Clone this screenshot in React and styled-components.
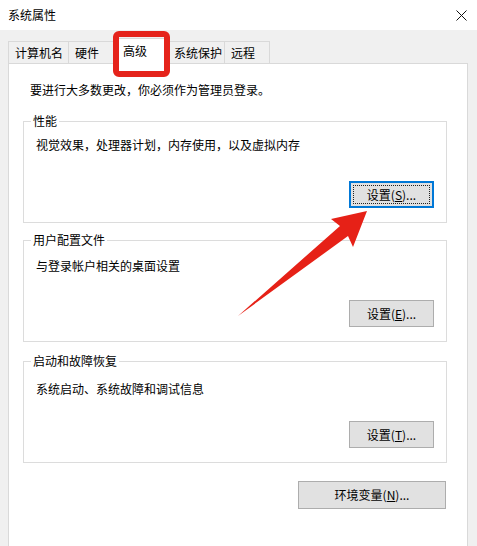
import styled, { createGlobalStyle } from "styled-components";

const GlobalStyle = createGlobalStyle`
  html, body {
    margin: 0;
    padding: 0;
    background: #f0f0f0;
  }
  * {
    box-sizing: border-box;
  }
`;

const Window = styled.div`
  position: relative;
  width: 477px;
  height: 546px;
  overflow: hidden;
  background: #f0f0f0;
  font-family: "Noto Sans CJK SC", "Liberation Sans", sans-serif;
  font-size: 12px;
  color: #000;
  display: flex;
  flex-direction: column;
`;

const TitleBar = styled.div`
  height: 30px;
  flex: none;
  background: #fff;
  display: flex;
  align-items: center;
  justify-content: space-between;
  padding: 0 10px 0 8px;
`;

const Title = styled.span`
  font-size: 12px;
  line-height: 16px;
  margin-top: -1px;
`;

const Body = styled.div`
  flex: 1;
  display: flex;
  flex-direction: column;
  padding: 8px 9px 0 8px;
`;

const TabStrip = styled.div`
  display: flex;
  align-items: flex-end;
  position: relative;
  z-index: 1;
  margin-bottom: -1px;
`;

const Tab = styled.div`
  width: ${(p) => p.$w}px;
  height: ${(p) => (p.$active ? 26 : 22)}px;
  margin-bottom: ${(p) => (p.$active ? 0 : 1)}px;
  margin-left: ${(p) => (p.$first ? 0 : -1)}px;
  padding: 0 0 ${(p) => (p.$active ? 2 : 0)}px ${(p) => (p.$active ? 8 : 6)}px;
  border: 1px solid #d9d9d9;
  border-bottom: none;
  background: ${(p) => (p.$active ? "#fff" : "#f0f0f0")};
  display: flex;
  align-items: center;
  line-height: 16px;
  white-space: nowrap;
`;

const Panel = styled.div`
  flex: 1;
  background: #fff;
  border: 1px solid #d9d9d9;
  border-bottom: none;
  padding: 18px 20px 0 14px;
  display: flex;
  flex-direction: column;
`;

const Intro = styled.p`
  margin: 0 0 15px 7px;
  line-height: 16px;
`;

const Group = styled.fieldset`
  margin: 0 0 ${(p) => p.$gap}px;
  padding: 0;
  min-width: 0;
  border: 1px solid #dcdcdc;
`;

const Legend = styled.legend`
  margin-left: 7px;
  padding: 0 2px;
  line-height: 16px;
`;

const GroupInner = styled.div`
  height: 93px;
  display: flex;
  flex-direction: column;
  align-items: flex-start;
  padding: ${(p) => p.$top}px 12px 14px 12px;
`;

const Desc = styled.span`
  line-height: 16px;
`;

const Button = styled.button`
  position: relative;
  width: ${(p) => p.$w}px;
  height: 27px;
  margin-top: auto;
  align-self: flex-end;
  background: #e1e1e1;
  border: 1px solid ${(p) => (p.$focused ? "#0078d7" : "#adadad")};
  box-shadow: ${(p) => (p.$focused ? "inset 0 0 0 1px #0078d7" : "none")};
  font-family: inherit;
  font-size: 12px;
  line-height: 16px;
  color: #000;
  padding: 0;
  display: flex;
  align-items: center;
  justify-content: center;

  ${(p) =>
    p.$focused &&
    `
    &::after {
      content: "";
      position: absolute;
      inset: 3px;
      border: 1px dotted #222;
    }
  `}

  u {
    text-decoration: underline;
    text-underline-offset: 1px;
  }
`;

const Footer = styled.div`
  display: flex;
  justify-content: flex-end;
  margin-top: 18px;
  padding-right: 1px;
`;

const EnvButton = styled(Button)`
  height: 28px;
  margin-top: 0;
`;

const Highlight = styled.div`
  position: absolute;
  left: 113px;
  top: 31px;
  width: 57px;
  height: 46px;
  border: 6px solid #e5231b;
  border-radius: 6px;
  z-index: 5;
  pointer-events: none;
`;

const Arrow = styled.svg`
  position: absolute;
  left: 0;
  top: 0;
  z-index: 5;
  pointer-events: none;
`;

const tabs = [
  { label: "计算机名", w: 61 },
  { label: "硬件", w: 47 },
  { label: "高级", w: 54, active: true },
  { label: "系统保护", w: 58 },
  { label: "远程", w: 46 },
];

const groups = [
  { title: "性能", desc: "视觉效果，处理器计划，内存使用，以及虚拟内存", key: "S", top: 8, focused: true, gap: 9 },
  { title: "用户配置文件", desc: "与登录帐户相关的桌面设置", key: "E", top: 10, gap: 11 },
  { title: "启动和故障恢复", desc: "系统启动、系统故障和调试信息", key: "T", top: 12, gap: 0 },
];

function CloseIcon() {
  return (
    <svg width="11" height="11" viewBox="0 0 11 11">
      <path d="M0.5 0.5 L10.5 10.5 M10.5 0.5 L0.5 10.5" stroke="#111" strokeWidth="1" fill="none" />
    </svg>
  );
}

export default function App() {
  return (
    <>
      <GlobalStyle />
      <Window>
        <TitleBar>
          <Title>系统属性</Title>
          <CloseIcon />
        </TitleBar>
        <Body>
          <TabStrip>
            {tabs.map((t, i) => (
              <Tab key={t.label} $w={t.w} $active={t.active} $first={i === 0}>
                {t.label}
              </Tab>
            ))}
          </TabStrip>
          <Panel>
            <Intro>要进行大多数更改，你必须作为管理员登录。</Intro>
            {groups.map((g) => (
              <Group key={g.title} $gap={g.gap}>
                <Legend>{g.title}</Legend>
                <GroupInner $top={g.top}>
                  <Desc>{g.desc}</Desc>
                  <Button $w={85} $focused={g.focused}>
                    设置(<u>{g.key}</u>)...
                  </Button>
                </GroupInner>
              </Group>
            ))}
            <Footer>
              <EnvButton $w={148}>
                环境变量(<u>N</u>)...
              </EnvButton>
            </Footer>
          </Panel>
        </Body>
        <Highlight />
        <Arrow width="477" height="546" viewBox="0 0 477 546">
          <polygon
            points="367,211 353,247 348,236 238,316 340,226 331,219"
            fill="#e62117"
          />
        </Arrow>
      </Window>
    </>
  );
}
